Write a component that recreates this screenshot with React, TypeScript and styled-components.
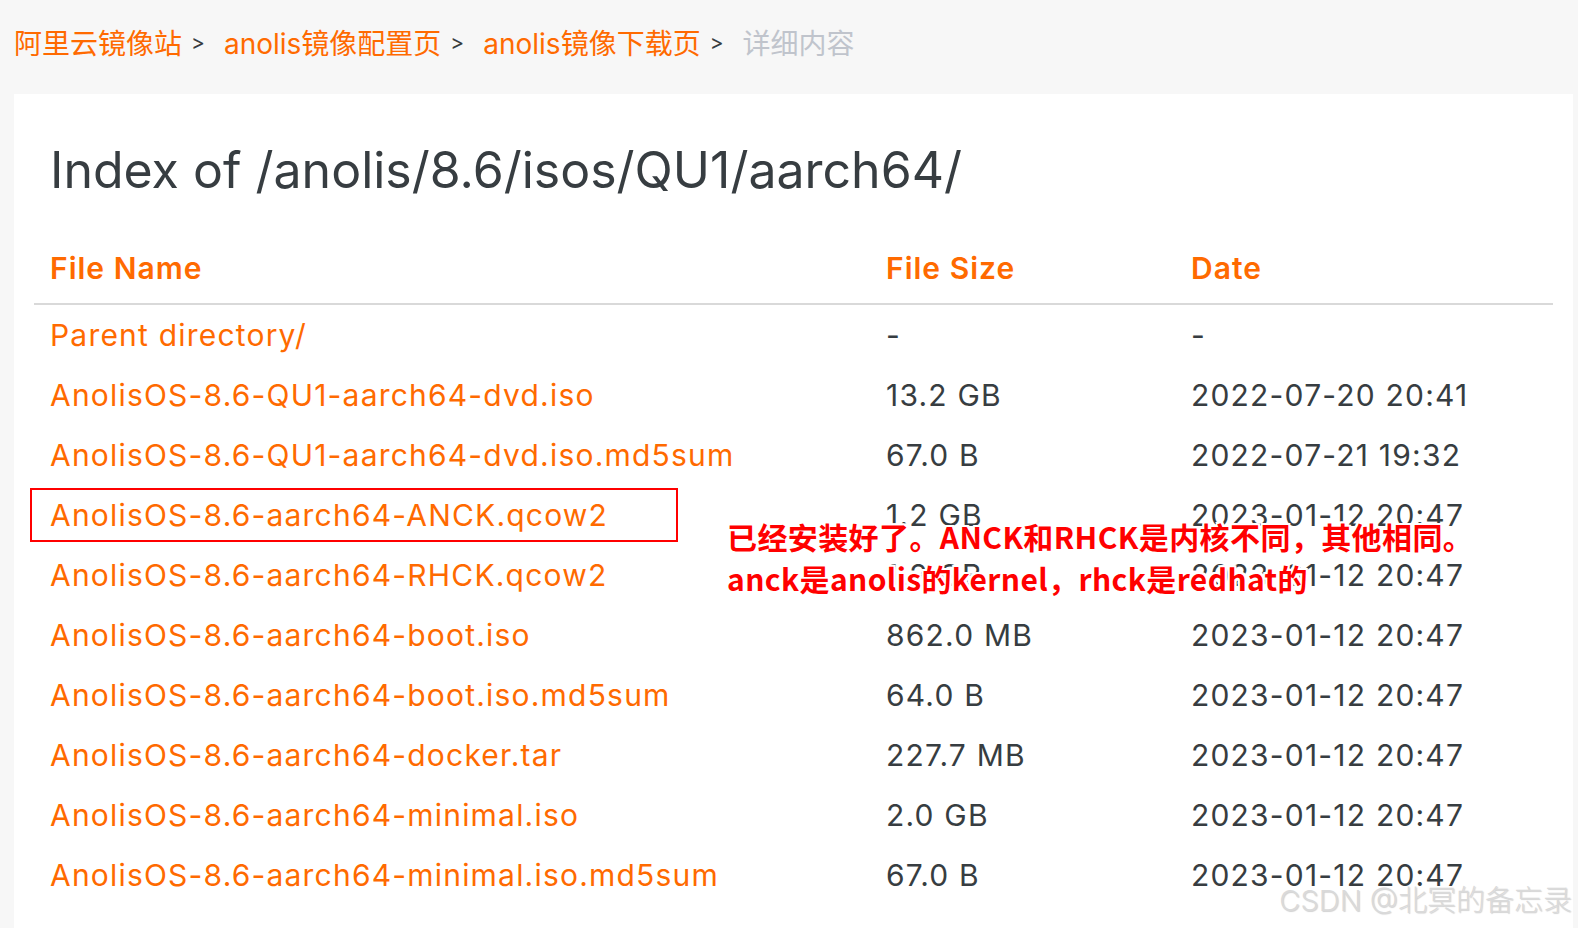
import React from 'react'
import styled, { createGlobalStyle } from 'styled-components'

const GlobalStyle = createGlobalStyle`
  html, body {
    margin: 0;
    padding: 0;
    background: #f7f7f7;
    font-family: Inter, "Noto Sans CJK SC", sans-serif;
    overflow: hidden;
  }
`

interface FileRow {
  name: string;
  size: string;
  date: string;
  marked?: boolean;
}

const rows: FileRow[] = [
  { name: 'Parent directory/', size: '-', date: '-' },
  { name: 'AnolisOS-8.6-QU1-aarch64-dvd.iso', size: '13.2 GB', date: '2022-07-20 20:41' },
  { name: 'AnolisOS-8.6-QU1-aarch64-dvd.iso.md5sum', size: '67.0 B', date: '2022-07-21 19:32' },
  { name: 'AnolisOS-8.6-aarch64-ANCK.qcow2', size: '1.2 GB', date: '2023-01-12 20:47', marked: true },
  { name: 'AnolisOS-8.6-aarch64-RHCK.qcow2', size: '1.2 GB', date: '2023-01-12 20:47' },
  { name: 'AnolisOS-8.6-aarch64-boot.iso', size: '862.0 MB', date: '2023-01-12 20:47' },
  { name: 'AnolisOS-8.6-aarch64-boot.iso.md5sum', size: '64.0 B', date: '2023-01-12 20:47' },
  { name: 'AnolisOS-8.6-aarch64-docker.tar', size: '227.7 MB', date: '2023-01-12 20:47' },
  { name: 'AnolisOS-8.6-aarch64-minimal.iso', size: '2.0 GB', date: '2023-01-12 20:47' },
  { name: 'AnolisOS-8.6-aarch64-minimal.iso.md5sum', size: '67.0 B', date: '2023-01-12 20:47' },
]

export default function App() {
  return (
    <>
      <GlobalStyle />
      <Page>
        <Breadcrumb>
          <Crumb>阿里云镜像站</Crumb>
          <Sep>&gt;</Sep>
          <Crumb>anolis镜像配置页</Crumb>
          <Sep>&gt;</Sep>
          <Crumb>anolis镜像下载页</Crumb>
          <Sep>&gt;</Sep>
          <Crumb current>详细内容</Crumb>
        </Breadcrumb>
        <Card>
          <Title>Index of /anolis/8.6/isos/QU1/aarch64/</Title>
          <Table>
            <thead>
              <tr>
                <Th>File Name</Th>
                <Th>File Size</Th>
                <Th>Date</Th>
              </tr>
            </thead>
            <tbody>
              {rows.map((r) => (
                <tr key={r.name}>
                  <NameCell>
                    {r.marked && <MarkBox />}
                    <FileLink href="#">{r.name}</FileLink>
                  </NameCell>
                  <Td>{r.size}</Td>
                  <Td>{r.date}</Td>
                </tr>
              ))}
            </tbody>
          </Table>
          <Note>
            已经安装好了。ANCK和RHCK是内核不同，其他相同。
            <br />
            anck是anolis的kernel，rhck是redhat的
          </Note>
        </Card>
        <Watermark>CSDN @北冥的备忘录</Watermark>
      </Page>
    </>
  )
}

const Page = styled.div`
  width: 1578px;
  height: 928px;
  overflow: hidden;
  position: relative;
`

const Breadcrumb = styled.div`
  display: flex;
  align-items: center;
  height: 94px;
  padding: 0 0 10px 14px;
  box-sizing: border-box;
  font-size: 28px;
`

const Crumb = styled.span<{ current?: boolean }>`
  color: ${({ current }) => (current ? '#c0c4cc' : '#ff6a00')};
`

const Sep = styled.span`
  color: #373d41;
  font-size: 21px;
  margin: 0 19px 0 9px;
`

const Card = styled.div`
  position: relative;
  margin-left: 14px;
  width: 1559px;
  background: #fff;
  padding: 43px 20px 0 20px;
  box-sizing: border-box;
  min-height: 900px;
`

const Title = styled.h1`
  margin: 0 0 0 16px;
  font-weight: 400;
  font-size: 50px;
  line-height: 66px;
  color: #373d41;
`

const Table = styled.table`
  width: 100%;
  border-collapse: collapse;
  margin-top: 37px;
  table-layout: fixed;
`

const Th = styled.th`
  box-sizing: border-box;
  text-align: left;
  color: #ff6a00;
  font-size: 30px;
  font-weight: 600;
  letter-spacing: 1px;
  height: 64px;
  padding: 0 0 8px 16px;
  vertical-align: middle;
  border-bottom: 2px solid #d9d9d9;
  &:nth-child(1) {
    width: 836px;
  }
  &:nth-child(2) {
    width: 305px;
  }
`

const Td = styled.td`
  font-size: 30px;
  letter-spacing: 1.2px;
  color: #373d41;
  height: 60px;
  padding: 0 0 0 16px;
  vertical-align: middle;
`

const NameCell = styled(Td)`
  position: relative;
`

const FileLink = styled.a`
  color: #ff6a00;
  text-decoration: none;
`

const MarkBox = styled.span`
  position: absolute;
  left: -4px;
  top: 3px;
  width: 648px;
  height: 54px;
  border: 2px solid #f00;
  box-sizing: border-box;
`

const Note = styled.div`
  position: absolute;
  left: 713px;
  top: 421px;
  font-family: "Noto Sans CJK SC", sans-serif;
  font-weight: 700;
  font-size: 30px;
  letter-spacing: 0.4px;
  line-height: 42px;
  color: #f00;
  text-shadow: -2px 0 #fff, 2px 0 #fff, 0 -2px #fff, 0 2px #fff, 2px 2px #fff, -2px -2px #fff, 2px -2px #fff, -2px 2px #fff;
`

const Watermark = styled.div`
  position: absolute;
  right: 6px;
  bottom: 9px;
  font-family: Inter, "Noto Sans CJK SC", sans-serif;
  font-size: 29px;
  font-weight: 300;
  color: #dadada;
  text-shadow: 1px 1px 1px rgba(0, 0, 0, 0.18);
`
